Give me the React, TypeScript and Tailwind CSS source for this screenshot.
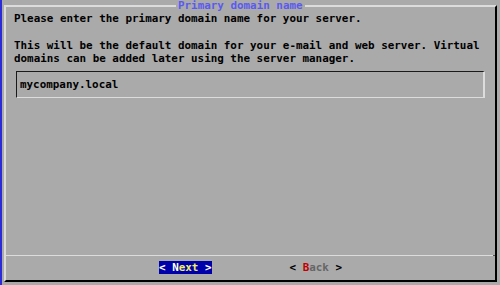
/**
 * Text-mode installer dialog (newt/whiptail look): gray panel, bevelled frame,
 * one input field and a Next / Back button row.
 */
const mono = "font-['DejaVu_Sans_Mono',monospace] font-bold text-[10.9px] leading-[13.3px]"

function App() {
  return (
    <div className={`flex h-[285px] w-[500px] overflow-hidden bg-[#aaaaaa] text-black ${mono}`}>
      <div className="h-full w-[2px] bg-[#2b2bd8]" />

      <div className="flex-1 pl-[2px] pt-[5px]">
        <div className="relative flex h-[277px] w-[493px] flex-col border-2 border-t-[#dcdcdc] border-l-[#dcdcdc] border-r-black border-b-black">
          {/* title sits on the top border */}
          <span className="absolute -top-[7px] left-[170px] bg-[#aaaaaa] px-[2px] leading-[11px] text-[#5a5af0]">
            Primary domain name
          </span>

          <div className="flex-1 pl-[8px] pt-[5px]">
            <p>Please enter the primary domain name for your server.</p>
            <p className="mt-[13.3px]">
              This will be the default domain for your e-mail and web server. Virtual
              <br />
              domains can be added later using the server manager.
            </p>

            <div className="mt-[6px] ml-[2px] flex h-[27px] w-[469px] items-center border-t border-l border-t-[#1a1a1a] border-l-[#1a1a1a] border-b border-r-2 border-b-[#dcdcdc] border-r-[#dcdcdc] pl-[3px]">
              mycompany.local
            </div>
          </div>

          <div className="flex h-[1px]">
            <div className="flex-1 bg-[#dcdcdc]" />
            <div className="w-[2px] bg-[#555555]" />
          </div>

          <div className="flex h-[24px] items-center justify-center gap-[78px] pb-[1px]">
            <span className="whitespace-pre bg-[#0000aa] text-white">
              {'< '}
              <span className="text-white">N</span>
              <span className="text-[#f0f060]">ext</span>
              {' >'}
            </span>
            <span className="whitespace-pre text-black">
              {'< '}
              <span className="text-[#c00000]">B</span>
              <span className="text-[#666666]">ack</span>
              {' >'}
            </span>
          </div>
        </div>
      </div>
    </div>
  )
}

export default App
